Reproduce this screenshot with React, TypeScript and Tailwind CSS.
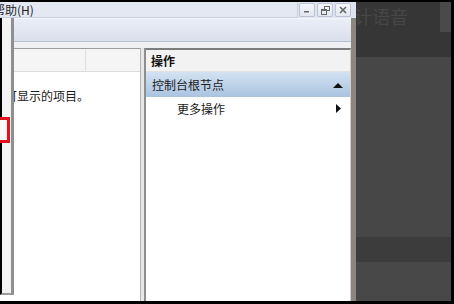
import React from 'react';

const cjk = { fontFamily: '"Noto Sans CJK SC", "Noto Sans", sans-serif' };

function WinButton({ children }: { children: React.ReactNode }) {
  return (
    <div className="w-[16px] h-[14px] mt-[1px] flex items-center justify-center bg-gradient-to-b from-[#f3f5fa] to-[#e2e7f1] border border-[#bcc4d3] rounded-[2px]">
      {children}
    </div>
  );
}

export default function App() {
  return (
    <div className="w-[454px] h-[304px] bg-black pt-[2px] pb-[3px] pr-[3px] flex overflow-hidden" style={cjk}>
      {/* MMC window */}
      <div className="relative w-[356px] h-full flex flex-col bg-white overflow-hidden">
        {/* menu bar */}
        <div className="h-[16px] flex items-stretch bg-[#dde3ef]">
          <div className="flex-1 flex items-center bg-[#e3e8f3] border-b border-r border-[#c9d0de] overflow-hidden">
            <span className="ml-[-7px] text-[12px] leading-none text-[#1e1e1e]">帮助(H)</span>
          </div>
          <div className="flex gap-[2px] pl-[1px] pr-[5px]">
            <WinButton>
              <svg width="8" height="8" viewBox="0 0 8 8"><rect x="1" y="5" width="5" height="1.5" fill="#666" /></svg>
            </WinButton>
            <WinButton>
              <svg width="9" height="9" viewBox="0 0 9 9" fill="none" stroke="#666" strokeWidth="1">
                <rect x="3.5" y="0.5" width="5" height="4" />
                <rect x="0.5" y="3.5" width="5" height="5" fill="#e8ecf4" />
                <line x1="0.5" y1="4.5" x2="5.5" y2="4.5" />
              </svg>
            </WinButton>
            <WinButton>
              <svg width="8" height="8" viewBox="0 0 8 8" stroke="#666" strokeWidth="1.6">
                <line x1="1" y1="1" x2="7" y2="7" />
                <line x1="7" y1="1" x2="1" y2="7" />
              </svg>
            </WinButton>
          </div>
        </div>

        <div className="flex-1 flex flex-col border-r-[5px] border-[#8c8680]">
          {/* toolbar */}
          <div className="h-[24px] bg-gradient-to-b from-[#eaeef8] to-[#d9dfec] border-t border-[#f4f6fb] border-b border-b-[#b9bfcb]" />
          <div className="h-[6px] bg-[#eef0f3]" />

          {/* panes */}
          <div className="flex-1 flex">
            <div className="w-[140px] flex flex-col border-t border-[#9c9c9c]">
              <div className="h-[23px] flex bg-[#f5f5f5] border-b border-[#dcdcdc]">
                <div className="w-[86px] border-r border-[#dedede]" />
              </div>
              <div className="flex-1 pt-[17px] overflow-hidden">
                <p className="ml-[-19px] whitespace-nowrap text-[12px] leading-[14px] text-[#1a1a1a]">没有可显示的项目。</p>
              </div>
            </div>

            <div className="w-[6px] bg-[#e8e8e8] border-l border-[#b3b3b3] border-r-2 border-r-[#8e8e8e]" />

            <div className="flex-1 flex flex-col border-t-2 border-[#7d7d7d] border-r border-r-[#d2cfcb]">
              <div className="h-[22px] flex items-center pl-[5px] bg-[#f2f2f2] border-b border-[#e2e2e2]">
                <span className="text-[12px] font-bold text-[#111]">操作</span>
              </div>
              <div className="h-[25px] flex items-center justify-between pl-[6px] pr-[7px] bg-gradient-to-b from-[#d3e2f2] to-[#a9c3df]">
                <span className="text-[12px] text-[#1a1a1a]">控制台根节点</span>
                <svg width="10" height="6" viewBox="0 0 10 6"><polygon points="0,6 5,1 10,6" fill="#111" /></svg>
              </div>
              <div className="h-[23px] flex items-center justify-between pl-[31px] pr-[9px]">
                <span className="text-[12px] text-[#1a1a1a]">更多操作</span>
                <svg width="5" height="9" viewBox="0 0 5 9"><polygon points="0,0 5,4.5 0,9" fill="#111" /></svg>
              </div>
              <div className="flex-1" />
            </div>
          </div>
        </div>

        {/* overlapping dialog edge */}
        <div className="absolute left-0 top-[16px] w-[14px] h-[277px] bg-[#f3f3f3] border-l-2 border-black border-r-[3px] border-r-[#8f8f8f] border-b-2 border-b-[#9c9c9c]">
          <div className="absolute left-[-12px] top-[99px] w-[20px] h-[26px] border-[3px] border-[#e3121c] bg-[#fafafa]" />
        </div>
      </div>

      {/* dark background on the right */}
      <div className="flex-1 flex flex-col">
        <div className="h-[55px] relative bg-[#363636] overflow-hidden">
          <span className="absolute left-[-2px] top-[3px] whitespace-nowrap text-[18px] leading-[22px] text-[#464646]">计语音</span>
          <div className="absolute right-0 top-0 w-[11px] h-[30px] bg-[#4a4a4a]" />
        </div>
        <div className="h-[180px] bg-[#474747]" />
        <div className="h-[25px] bg-[#3c3c3c]" />
        <div className="flex-1 bg-[#484848]" />
      </div>
    </div>
  );
}
